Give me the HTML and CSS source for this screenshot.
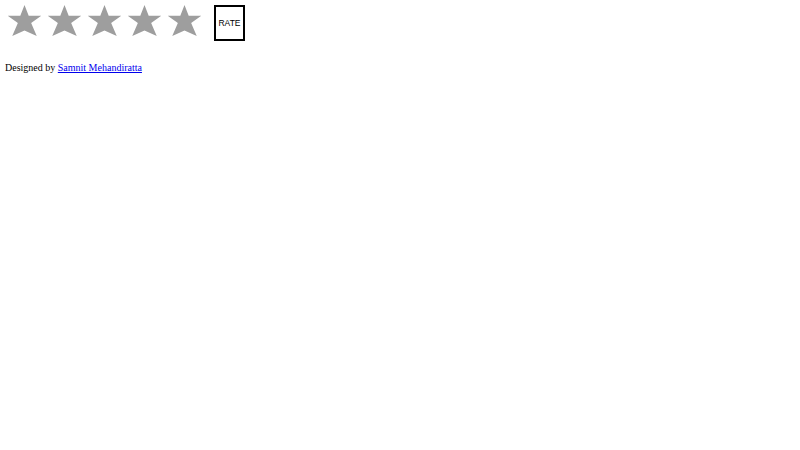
FILE: index.html
```html
<!DOCTYPE html>
<html>
<head>
<meta charset="utf-8">
<link rel="stylesheet" href="styles.css">
</head>
<body>
<div class="rating">
  <div class="stars">
    <span class="star"></span>
    <span class="star"></span>
    <span class="star"></span>
    <span class="star"></span>
    <span class="star"></span>
  </div>
  <button class="rate">RATE</button>
</div>
<p class="credit">Designed by <a href="#">Samnit Mehandiratta</a></p>
</body>
</html>
```
FILE: styles.css
```css
body {
  margin: 5px;
  font-family: "Liberation Serif", "Times New Roman", serif;
  font-size: 10px;
  background: #fff;
}
.rating {
  display: flex;
  align-items: flex-start;
  gap: 12px;
}
.stars {
  display: flex;
  gap: 5px;
  padding-left: 2px;
}
.star {
  display: block;
  width: 35px;
  height: 31px;
  background: #9e9e9e;
  clip-path: polygon(50% 0%, 62% 35%, 98% 35%, 69% 58%, 85% 100%, 50% 82%, 15% 100%, 31% 58%, 2% 35%, 38% 35%);
}
.rate {
  box-sizing: border-box;
  width: 31px;
  height: 36px;
  padding: 0;
  border: 2px solid #000;
  background: #fff;
  font-family: "Liberation Sans", Arial, sans-serif;
  font-size: 8.5px;
  color: #000;
  display: flex;
  align-items: center;
  justify-content: center;
}
.credit {
  margin: 21px 0 0;
  line-height: 12px;
  color: #000;
}
.credit a {
  color: #0000ee;
}
```
